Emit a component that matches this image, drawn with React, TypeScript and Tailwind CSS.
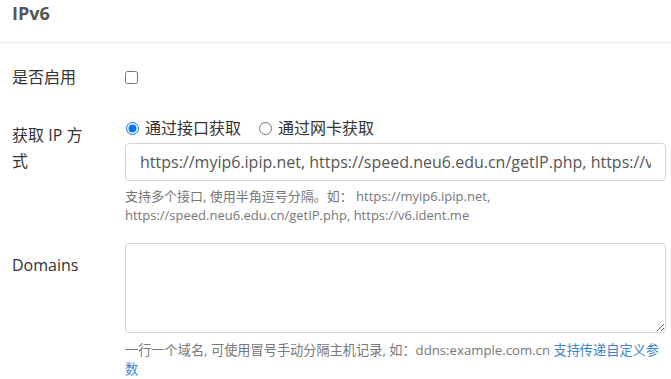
import React from "react";

export default function App() {
  const font = { fontFamily: '"Open Sans", "Noto Sans CJK SC", sans-serif' };
  return (
    <div className="w-[671px] h-[379px] overflow-hidden bg-white text-[#333]" style={font}>
      <div className="h-[43px] border-b border-[#ebebeb] px-3 pt-[1px]">
        <div className="text-[18px] font-bold text-[#555] leading-[24px]">IPv6</div>
      </div>
      <div className="pl-3 pr-[5px]">
        {/* Row 1 */}
        <div className="flex mt-[22px] h-[24px] items-center">
          <div className="w-[113px] shrink-0 text-[16px] leading-[24px]">是否启用</div>
          <input type="checkbox" className="m-0 w-[13px] h-[13px]" />
        </div>
        {/* Row 2 */}
        <div className="flex mt-[27px]">
          <div className="w-[113px] shrink-0 text-[16px] leading-[26px] pt-[6px]">
            获取 IP 方<br />式
          </div>
          <div className="flex-1 min-w-0">
            <div className="flex items-center h-[24px] text-[16px]">
              <label className="flex items-center">
                <input type="radio" name="m" defaultChecked className="m-0 ml-[1px] w-[13px] h-[13px]" />
                <span className="ml-[6px]">通过接口获取</span>
              </label>
              <label className="flex items-center ml-[18px]">
                <input type="radio" name="m" className="m-0 w-[13px] h-[13px]" />
                <span className="ml-[6px]">通过网卡获取</span>
              </label>
            </div>
            <input
              readOnly
              defaultValue="https://myip6.ipip.net, https://speed.neu6.edu.cn/getIP.php, https://v6.ident.me"
              className="block w-full mt-[3px] h-[38px] border border-[#d4d4d4] rounded-[4px] px-[14px] text-[16px] text-[#555] outline-none bg-white"
              style={font}
            />
            <div className="mt-[6px] text-[13px] leading-[19px] text-[#777]">
              支持多个接口, 使用半角逗号分隔。如： https://myip6.ipip.net,
              <br />
              https://speed.neu6.edu.cn/getIP.php, https://v6.ident.me
            </div>
          </div>
        </div>
        {/* Row 3 */}
        <div className="flex mt-[18px]">
          <div className="w-[113px] shrink-0 text-[16px] leading-[24px] pt-[10px]">Domains</div>
          <div className="flex-1 min-w-0">
            <textarea className="block w-full h-[90px] border border-[#d4d4d4] rounded-[4px] resize-y outline-none" />
            <div className="mt-[8px] text-[13.2px] leading-[19px] text-[#777]">
              <div className="whitespace-nowrap">
                一行一个域名, 可使用冒号手动分隔主机记录, 如：ddns:example.com.cn{" "}
                <span className="text-[#3a86d4]">支持传递自定义参</span>
              </div>
              <div className="text-[#3a86d4]">数</div>
            </div>
          </div>
        </div>
      </div>
    </div>
  );
}
